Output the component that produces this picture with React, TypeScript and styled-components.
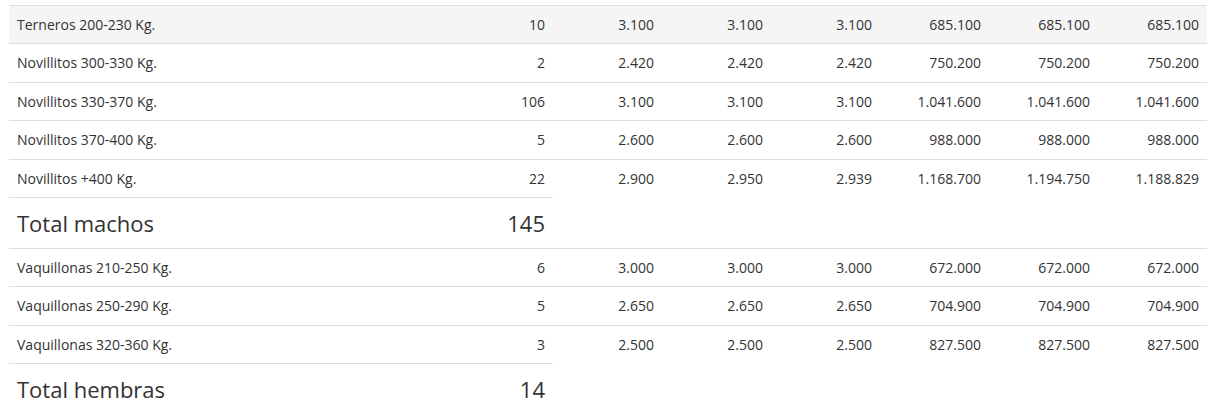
import styled, { createGlobalStyle } from 'styled-components';

const GlobalStyle = createGlobalStyle`
  body {
    margin: 0;
    background: #fff;
    font-family: 'Open Sans', 'Noto Sans', sans-serif;
    color: #333;
  }
`;

const Wrapper = styled.div`
  padding: 5px 0 0 9px;
`;

const Table = styled.table`
  width: 1198px;
  table-layout: fixed;
  border-collapse: separate;
  border-spacing: 0;
  font-size: 14px;
`;

const Col = styled.col<{ $wide?: boolean }>`
  width: ${(p) => (p.$wide ? '435px' : '109px')};
`;

const Row = styled.tr<{ $hover?: boolean }>`
  background: ${(p) => (p.$hover ? '#f5f5f5' : 'transparent')};
`;

const Cell = styled.td<{ $num?: boolean; $bare?: boolean }>`
  padding: 8px;
  line-height: 21.4px;
  text-align: ${(p) => (p.$num ? 'right' : 'left')};
  border-top: ${(p) => (p.$bare ? 'none' : '1px solid #ddd')};
  white-space: nowrap;
`;

const TotalCell = styled.td<{ $num?: boolean }>`
  padding: 13px 8px;
  line-height: 24px;
  font-size: 22px;
  border-top: 1px solid #ddd;
  text-align: ${(p) => (p.$num ? 'right' : 'left')};
`;

type Line = [string, number, string, string, string, string, string, string];

const machos: Line[] = [
  ['Terneros 200-230 Kg.', 10, '3.100', '3.100', '3.100', '685.100', '685.100', '685.100'],
  ['Novillitos 300-330 Kg.', 2, '2.420', '2.420', '2.420', '750.200', '750.200', '750.200'],
  ['Novillitos 330-370 Kg.', 106, '3.100', '3.100', '3.100', '1.041.600', '1.041.600', '1.041.600'],
  ['Novillitos 370-400 Kg.', 5, '2.600', '2.600', '2.600', '988.000', '988.000', '988.000'],
  ['Novillitos +400 Kg.', 22, '2.900', '2.950', '2.939', '1.168.700', '1.194.750', '1.188.829'],
];

const hembras: Line[] = [
  ['Vaquillonas 210-250 Kg.', 6, '3.000', '3.000', '3.000', '672.000', '672.000', '672.000'],
  ['Vaquillonas 250-290 Kg.', 5, '2.650', '2.650', '2.650', '704.900', '704.900', '704.900'],
  ['Vaquillonas 320-360 Kg.', 3, '2.500', '2.500', '2.500', '827.500', '827.500', '827.500'],
];

function DataRow({ line, hover }: { line: Line; hover?: boolean }) {
  const [name, ...values] = line;
  return (
    <Row $hover={hover}>
      <Cell>{name}</Cell>
      {values.map((v, i) => (
        <Cell key={i} $num>
          {v}
        </Cell>
      ))}
    </Row>
  );
}

function TotalRow({ label, total }: { label: string; total: number }) {
  return (
    <Row>
      <TotalCell>{label}</TotalCell>
      <TotalCell $num>{total}</TotalCell>
      {[0, 1, 2, 3, 4, 5].map((i) => (
        <Cell key={i} $bare />
      ))}
    </Row>
  );
}

export default function App() {
  return (
    <Wrapper>
      <GlobalStyle />
      <Table>
        <colgroup>
          <Col $wide />
          {[0, 1, 2, 3, 4, 5, 6].map((i) => (
            <Col key={i} />
          ))}
        </colgroup>
        <tbody>
          {machos.map((l, i) => (
            <DataRow key={l[0]} line={l} hover={i === 0} />
          ))}
          <TotalRow label="Total machos" total={145} />
          {hembras.map((l) => (
            <DataRow key={l[0]} line={l} />
          ))}
          <TotalRow label="Total hembras" total={14} />
        </tbody>
      </Table>
    </Wrapper>
  );
}
